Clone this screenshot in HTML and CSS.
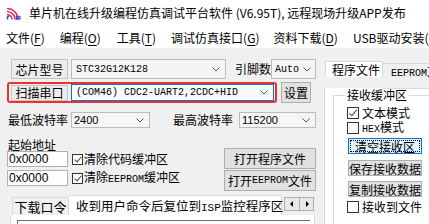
FILE: index.html
```html
<!DOCTYPE html>
<html>
<head>
<meta charset="utf-8">
<link rel="stylesheet" href="styles.css">
</head>
<body>
<div class="window">
  <div class="titlebar">
    <svg class="appicon" width="16" height="14" viewBox="0 0 16 14">
      <path d="M1 2.5 A 11 11 0 0 1 12 13.5" fill="none" stroke="#e2335f" stroke-width="1.6"/>
      <path d="M1 5.5 A 8 8 0 0 1 9 13.5" fill="none" stroke="#e2335f" stroke-width="1.6"/>
      <path d="M1 8.5 A 5 5 0 0 1 6 13.5" fill="none" stroke="#e2335f" stroke-width="1.6"/>
      <path d="M1.5 13.5 L1.5 11.5 Q1.5 10 3.5 10" fill="none" stroke="#2a55c8" stroke-width="1.6"/>
      <path d="M10.5 9.5 V14 M13 9.5 V14 M9.5 10.8 H15 M9.5 12.8 H15" stroke="#2a55c8" stroke-width="1"/>
    </svg>
    <span class="title">单片机在线升级编程仿真调试平台软件 (V6.95T), 远程现场升级APP发布</span>
  </div>
  <div class="menubar">
    <span class="menu m1">文件(<u>F</u>)</span>
    <span class="menu m2">编程(<u>O</u>)</span>
    <span class="menu m3">工具(<u>T</u>)</span>
    <span class="menu m4">调试仿真接口(<u>G</u>)</span>
    <span class="menu m5">资料下载(<u>D</u>)</span>
    <span class="menu m6">USB驱动安装(<u>D</u>)</span>
  </div>
  <div class="client">
    <div class="left">
      <div class="row r1">
        <div class="lbox">芯片型号</div>
        <div class="combo c-chip"><span class="mono">STC32G12K128</span><svg class="arrow" width="8" height="5" viewBox="0 0 8 5"><polyline points="0.5,0.5 4,4 7.5,0.5" fill="none" stroke="#555" stroke-width="1"/></svg></div>
        <span class="lbl pins">引脚数</span>
        <div class="combo c-auto"><span class="mono">Auto</span><svg class="arrow" width="8" height="5" viewBox="0 0 8 5"><polyline points="0.5,0.5 4,4 7.5,0.5" fill="none" stroke="#555" stroke-width="1"/></svg></div>
      </div>
      <div class="row r2">
        <div class="highlight">
          <div class="lbox lbox-scan">扫描串口</div>
          <div class="combo focus c-port"><span class="mono">(COM46) CDC2-UART2,2CDC+HID</span><svg class="arrow" width="8" height="5" viewBox="0 0 8 5"><polyline points="0.5,0.5 4,4 7.5,0.5" fill="none" stroke="#555" stroke-width="1"/></svg></div>
        </div>
        <div class="btn b-set">设置</div>
      </div>
      <div class="row r3">
        <span class="lbl lbl-min">最低波特率</span>
        <div class="combo c-baud1"><span class="num">2400</span><svg class="arrow" width="8" height="5" viewBox="0 0 8 5"><polyline points="0.5,0.5 4,4 7.5,0.5" fill="none" stroke="#555" stroke-width="1"/></svg></div>
        <span class="lbl lbl-max">最高波特率</span>
        <div class="combo c-baud2"><span class="num">115200</span><svg class="arrow" width="8" height="5" viewBox="0 0 8 5"><polyline points="0.5,0.5 4,4 7.5,0.5" fill="none" stroke="#555" stroke-width="1"/></svg></div>
      </div>
      <div class="addr">
        <div class="addr-left">
          <div class="lbl addr-title">起始地址</div>
          <div class="addr-line"><div class="input">0x0000</div><span class="chk small checked"></span><span class="lbl">清除代码缓冲区</span></div>
          <div class="addr-line second"><div class="input">0x0000</div><span class="chk small checked"></span><span class="lbl">清除<span class="mono">EEPROM</span>缓冲区</span></div>
        </div>
        <div class="addr-right">
          <div class="btn b-open">打开程序文件</div>
          <div class="btn b-open second">打开<span class="mono">EEPROM</span>文件</div>
        </div>
      </div>
      <div class="tabs-bottom">
        <div class="btab">下载口令</div>
        <div class="btab active">收到用户命令后复位到<span class="mono big">ISP</span>监控程序区</div>
        <div class="tabscroll"><span class="tri tri-l"></span><span class="tri tri-r"></span></div>
      </div>
      <div class="page-bottom"><div class="memo"></div></div>
    </div>
    <div class="right">
      <div class="rtabs">
        <div class="rtab active">程序文件</div>
        <div class="rtab"><span class="mono">EEPROM</span>文件</div>
      </div>
      <div class="rpage">
        <fieldset class="group">
          <legend class="legend">接收缓冲区</legend>
          <div class="crow c1"><span class="chk checked"></span><span class="lbl">文本模式</span></div>
          <div class="crow c2"><span class="chk"></span><span class="lbl"><span class="mono">HEX</span>模式</span></div>
          <div class="btn gbtn focus g1"><span class="focusrect">清空接收区</span></div>
          <div class="btn gbtn g2">保存接收数据</div>
          <div class="btn gbtn g3">复制接收数据</div>
          <div class="crow c3"><span class="chk"></span><span class="lbl">接收到文件</span></div>
        </fieldset>
      </div>
    </div>
  </div>
</div>
</body>
</html>
```

FILE: styles.css
```css
* { box-sizing: border-box; }
html, body { margin: 0; padding: 0; }
body {
  width: 429px;
  height: 224px;
  overflow: hidden;
  background: #f0f0f0;
  font-family: "Noto Sans CJK SC", "Noto Sans", sans-serif;
  font-size: 12px;
  color: #000;
}
.window { width: 429px; height: 224px; overflow: hidden; }

.titlebar {
  height: 28px;
  background: #fff;
  display: flex;
  align-items: center;
  padding-left: 6px;
  padding-bottom: 2px;
}
.appicon { flex: none; margin-right: 7px; }
.title { font-size: 12px; line-height: 14px; white-space: nowrap; }

.menubar {
  height: 20px;
  background: #fff;
  display: flex;
  align-items: center;
  white-space: nowrap;
  overflow: hidden;
  padding-bottom: 1px;
}
.menu { font-size: 12px; line-height: 14px; flex: none; }
.menu u { text-decoration-thickness: 1px; text-underline-offset: 2px; }
.m1 { margin-left: 6px; }
.m2 { margin-left: 15px; }
.m3 { margin-left: 16px; }
.m4 { margin-left: 15px; }
.m5 { margin-left: 14px; }
.m6 { margin-left: 15px; }

.client { display: flex; height: 176px; }
.left { width: 318px; flex: none; }
.right { flex: none; width: 111px; margin-left: 6px; overflow: hidden; }

.mono { font-family: "Liberation Mono", "DejaVu Sans Mono", monospace; font-size: 10px; }
.mono.big { font-size: 11px; }
.num { font-family: "Liberation Sans", Arial, sans-serif; font-size: 11px; }
.lbl { white-space: nowrap; line-height: 14px; }

.row { display: flex; align-items: center; }
.r1 { margin-top: 11px; height: 20px; padding-left: 11px; }
.lbox {
  width: 57px;
  height: 20px;
  border: 1px solid #c4c4c4;
  background: #ececec;
  display: flex;
  align-items: center;
  justify-content: center;
  font-size: 12px;
  flex: none;
}
.combo {
  height: 20px;
  border: 1px solid #bcbcbc;
  background: #f5f5f5;
  display: flex;
  align-items: center;
  justify-content: space-between;
  padding: 0 5px 0 4px;
  flex: none;
  white-space: nowrap;
}
.arrow { flex: none; }
.c-chip { margin-left: 3px; width: 155px; }
.pins { margin-left: 9px; width: 36px; }
.c-auto { width: 45px; padding-left: 3px; padding-right: 4px; }

.r2 { margin-top: 3px; height: 21px; }
.highlight {
  margin-left: 7px;
  width: 270px;
  height: 21px;
  border: 2px solid #f02f2f;
  border-radius: 3px;
  display: flex;
  align-items: center;
  flex: none;
}
.lbox-scan { margin-left: 2px; height: 16px; }
.c-port {
  margin-left: 3px;
  width: 203px;
  height: 17px;
  border-color: #0078d7;
  background: #f8fbfe;
}
.btn {
  border: 1px solid #adadad;
  background: #e1e1e1;
  display: flex;
  align-items: center;
  justify-content: center;
  white-space: nowrap;
  flex: none;
  font-size: 12px;
}
.b-set { margin-left: 4px; width: 30px; height: 21px; }

.r3 { margin-top: 9px; height: 16px; }
.lbl-min { margin-left: 8px; width: 60px; }
.c-baud1 { margin-left: 3px; width: 79px; height: 16px; padding-left: 2px; }
.lbl-max { margin-left: 23px; width: 60px; }
.c-baud2 { margin-left: 6px; width: 77px; height: 16px; padding-left: 2px; }

.addr { display: flex; height: 63px; }
.addr-left { width: 224px; padding-left: 7px; padding-top: 10px; flex: none; }
.addr-title { margin-left: 1px; height: 13px; line-height: 13px; }
.addr-line { display: flex; align-items: center; height: 16px; }
.addr-line.second { margin-top: 3px; }
.input {
  width: 61px;
  height: 16px;
  background: #fff;
  border: 1px solid #b0b0b0;
  font-family: "Liberation Sans", Arial, sans-serif;
  font-size: 12px;
  line-height: 14px;
  padding-left: 1px;
  flex: none;
}
.chk {
  width: 12px;
  height: 12px;
  border: 1px solid #333;
  background: #fff;
  flex: none;
  position: relative;
  margin-right: 3px;
}
.chk.small { width: 11px; height: 11px; margin-left: 4px; margin-right: 1px; }
.chk.checked::after {
  content: "";
  position: absolute;
  left: 3px;
  top: 0px;
  width: 3px;
  height: 7px;
  border-right: 1.5px solid #444;
  border-bottom: 1.5px solid #444;
  transform: rotate(40deg);
}
.chk.small.checked::after { left: 3px; top: 0px; height: 6px; }

.addr-right { flex: none; padding-top: 20px; }
.b-open { width: 92px; height: 21px; }
.b-open.second { margin-top: 1px; }

.tabs-bottom {
  margin-top: 4px;
  height: 20px;
  display: flex;
  align-items: flex-end;
  padding-left: 12px;
}
.btab {
  height: 18px;
  border: 1px solid #d9d9d9;
  border-bottom: none;
  background: #f0f0f0;
  font-size: 13px;
  line-height: 17px;
  white-space: nowrap;
  width: 57px;
  text-align: center;
  flex: none;
}
.btab.active {
  height: 20px;
  width: 213px;
  background: #fff;
  border-left: none;
  line-height: 19px;
  padding-left: 7px;
  text-align: left;
  font-size: 12.5px;
}
.tabscroll {
  align-self: flex-start;
  margin-top: 2px;
  margin-left: 2px;
  width: 30px;
  height: 14px;
  border: 1px solid #adadad;
  background: #e9e9e9;
  display: flex;
  flex: none;
}
.tri { flex: 1; position: relative; }
.tri-l { border-right: 1px solid #adadad; }
.tri::after {
  content: "";
  position: absolute;
  top: 3px;
  border-top: 3px solid transparent;
  border-bottom: 3px solid transparent;
}
.tri-l::after { left: 5px; border-right: 3px solid #000; }
.tri-r::after { left: 6px; border-left: 3px solid #000; }

.page-bottom {
  margin-left: 10px;
  width: 305px;
  height: 20px;
  background: #fff;
  border: 1px solid #d9d9d9;
  border-top: none;
  padding: 5px 0 0 6px;
}
.memo {
  width: 293px;
  height: 20px;
  border-top: 1px solid #6b6b6b;
  border-left: 1px solid #6b6b6b;
}

.rtabs { margin-top: 13px; height: 16px; display: flex; align-items: flex-end; padding-left: 1px; white-space: nowrap; }
.rtab {
  height: 14px;
  border: 1px solid #d9d9d9;
  border-bottom: none;
  border-left: none;
  background: #f0f0f0;
  padding-left: 8px;
  line-height: 13px;
  flex: none;
  width: 80px;
}
.rtab.active {
  height: 16px;
  width: 58px;
  border-left: 1px solid #d9d9d9;
  background: #fff;
  padding-left: 6px;
  line-height: 15px;
}
.rpage {
  height: 160px;
  width: 120px;
  background: #fff;
  border: 1px solid #d9d9d9;
  border-top: none;
  position: relative;
}
.rpage::before {
  content: "";
  position: absolute;
  left: 58px;
  right: 0;
  top: 0;
  border-top: 1px solid #d9d9d9;
}
.group {
  margin: 11px 0 0 8px;
  padding: 0 0 0 13px;
  border: 1px solid #dcdcdc;
  width: 110px;
  height: 150px;
}
.legend {
  margin-left: -2px;
  padding: 0 2px;
  line-height: 14px;
  font-size: 12px;
  white-space: nowrap;
}
.crow { display: flex; align-items: center; height: 14px; }
.c1 { margin-top: 4px; }
.c2 { margin-top: 1px; }
.c3 { margin-top: 3px; }
.gbtn { width: 74px; height: 16px; margin-left: 1px; }
.g1 { margin-top: 3px; }
.g2 { margin-top: 6px; }
.g3 { margin-top: 5px; }
.btn.focus { border: 1px solid #0078d7; background: #e5f1fb; padding: 1px; }
.focusrect {
  width: 100%;
  height: 100%;
  border: 1px dotted #000;
  display: flex;
  align-items: center;
  justify-content: center;
}
```
